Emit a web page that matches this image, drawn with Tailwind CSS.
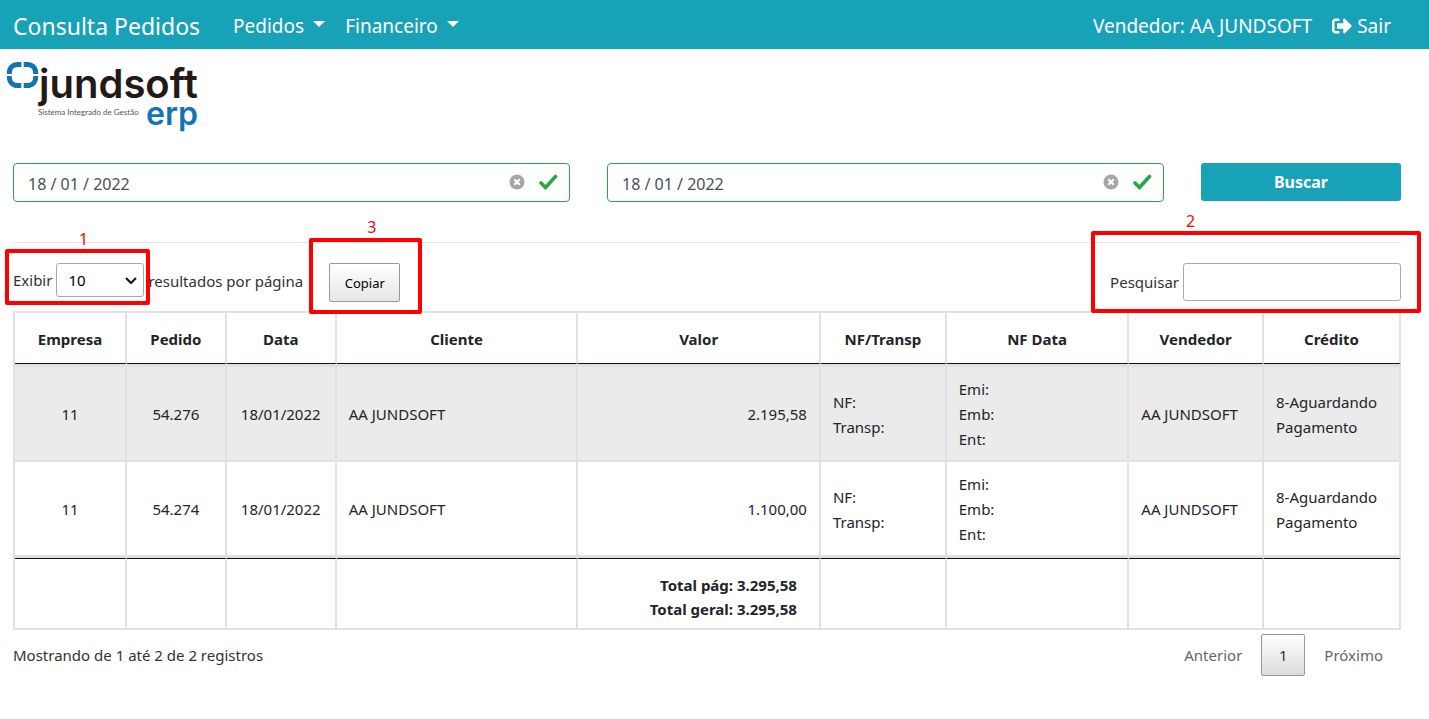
<!DOCTYPE html>
<html lang="pt-BR">
<head>
<meta charset="utf-8">
<meta name="viewport" content="width=device-width, initial-scale=1">
<title>Consulta Pedidos</title>
<script src="https://cdn.jsdelivr.net/npm/@tailwindcss/browser@4"></script>
</head>
<body class="bg-white font-['Noto_Sans',sans-serif] text-[15px] leading-6 text-[#212529]">

<nav class="flex h-[49px] items-center justify-between bg-[#17a2b8] pr-[38px] pl-[13px] pt-[3px] text-[19px] text-white">
  <div class="flex items-center">
    <a href="#" class="mr-[33px] text-[23px]">Consulta Pedidos</a>
    <button type="button" class="mr-5 flex items-center gap-[9px]">Pedidos
      <svg class="mb-1 h-1.5 w-3" viewBox="0 0 12 6" fill="currentColor" aria-hidden="true"><path d="M0 0h12L6 6z"/></svg>
    </button>
    <button type="button" class="flex items-center gap-[9px]">Financeiro
      <svg class="mb-1 h-1.5 w-3" viewBox="0 0 12 6" fill="currentColor" aria-hidden="true"><path d="M0 0h12L6 6z"/></svg>
    </button>
  </div>
  <div class="flex items-center gap-5">
    <span>Vendedor: AA JUNDSOFT</span>
    <a href="#" class="flex items-center gap-[5px]">
      <svg class="size-5" viewBox="0 0 512 512" fill="currentColor" aria-hidden="true"><path d="M497 273L329 441c-15 15-41 4.500-41-17v-96H152c-13.300 0-24-10.700-24-24v-96c0-13.300 10.700-24 24-24h136V88c0-21.400 25.900-32 41-17l168 168c9.300 9.400 9.300 24.600 0 34zM192 436v-40c0-6.600-5.400-12-12-12H96c-17.700 0-32-14.300-32-32V160c0-17.700 14.300-32 32-32h84c6.600 0 12-5.400 12-12V76c0-6.600-5.400-12-12-12H96c-53 0-96 43-96 96v192c0 53 43 96 96 96h84c6.600 0 12-5.400 12-12z"/></svg>
      Sair</a>
  </div>
</nav>

<header class="px-1.5 pt-3">
  <svg class="h-20 w-[196px]" viewBox="0 0 196 80" role="img" aria-label="Jundsoft ERP">
    <g fill="none" stroke="#1273b5" stroke-width="5">
      <path d="M15.300 3.500h-3.500c-5 0-8.500 3.500-8.500 8.500v1"/>
      <path d="M17.700 3.500h3.500c5 0 8.500 3.500 8.500 8.500v1"/>
      <path d="M3.300 15v1c0 5 3.500 8.500 8.500 8.500h3.500"/>
      <path d="M29.700 15v1c0 5-3.500 8.500-8.500 8.500h-3.500"/>
    </g>
    <text x="33" y="37" font-family="Inter, sans-serif" font-size="40" font-weight="600" fill="#231916">jundsoft</text>
    <text x="32" y="54" font-family="Lato, sans-serif" font-size="8" fill="#555">Sistema Integrado de Gestão</text>
    <text x="140" y="64" font-family="Inter, sans-serif" font-size="32" font-weight="600" fill="#1273b5">erp</text>
  </svg>
</header>

<main class="pr-7 pl-[13px]">
  <form class="mt-[22px] flex items-start gap-[37px]">
    <div class="relative flex-1">
      <input type="text" aria-label="Data inicial" value="18 / 01 / 2022" class="block h-[39px] w-full rounded border border-[#28a745] pr-20 pl-3.5 pt-0.5 text-base text-[#495057]">
      <div class="absolute top-0 right-3 bottom-0.5 flex items-center gap-3.5">
        <button type="button" aria-label="Limpar data inicial"><svg class="size-4" viewBox="0 0 16 16"><circle cx="8" cy="8" r="7.500" fill="#a6a6a6"/><path d="M5.300 5.300l5.400 5.400m0-5.400l-5.400 5.400" stroke="#fff" stroke-width="2"/></svg></button>
        <svg class="h-4 w-[19px]" viewBox="0 0 19 16" fill="none" aria-hidden="true"><path d="M2 9l4.500 4.500L16.500 2.500" stroke="#28a745" stroke-width="3.600" stroke-linecap="round"/></svg>
      </div>
    </div>
    <div class="relative flex-1">
      <input type="text" aria-label="Data final" value="18 / 01 / 2022" class="block h-[39px] w-full rounded border border-[#28a745] pr-20 pl-3.5 pt-0.5 text-base text-[#495057]">
      <div class="absolute top-0 right-3 bottom-0.5 flex items-center gap-3.5">
        <button type="button" aria-label="Limpar data final"><svg class="size-4" viewBox="0 0 16 16"><circle cx="8" cy="8" r="7.500" fill="#a6a6a6"/><path d="M5.300 5.300l5.400 5.400m0-5.400l-5.400 5.400" stroke="#fff" stroke-width="2"/></svg></button>
        <svg class="h-4 w-[19px]" viewBox="0 0 19 16" fill="none" aria-hidden="true"><path d="M2 9l4.500 4.500L16.500 2.500" stroke="#28a745" stroke-width="3.600" stroke-linecap="round"/></svg>
      </div>
    </div>
    <button type="submit" class="h-[38px] w-[200px] rounded-[3px] bg-[#17a2b8] text-base font-bold text-white">Buscar</button>
  </form>

  <hr class="mt-10 border-[#e5e5e5]">

  <div class="mt-5 flex items-start justify-between text-[#333]">
    <div class="flex items-start">
      <div class="relative flex items-center gap-1">
        <label for="tamanho">Exibir</label>
        <span class="relative">
          <select id="tamanho" class="block h-[34px] w-[88px] appearance-none rounded-[3px] border border-[#aaa] bg-white pl-[11px] text-black"><option>10</option><option>25</option><option>50</option><option>100</option></select>
          <svg class="pointer-events-none absolute top-3.5 right-[7px] h-[7px] w-3" viewBox="0 0 12 7" fill="none" stroke="#111" stroke-width="2" aria-hidden="true"><path d="M1 1l5 5 5-5"/></svg>
        </span>
        <div class="pointer-events-none absolute -top-3.5 -right-1.5 -bottom-2 -left-2 z-10 rounded-xs border-4 border-[#f00]"></div>
        <span class="absolute -top-9 left-[66px] text-base text-[#f00]">1</span>
      </div>
      <span class="ml-1 pt-1.5">resultados por página |</span>
      <div class="relative ml-3.5">
        <button type="button" class="h-[39px] w-[71px] rounded-xs border border-[#999] bg-linear-to-b from-white to-[#e6e6e6] text-[13px] text-black">Copiar</button>
        <div class="pointer-events-none absolute -top-[25px] -right-[22px] -bottom-3 -left-5 rounded-xs border-4 border-[#f00]"></div>
        <span class="absolute -top-12 left-[38px] text-base text-[#f00]">3</span>
      </div>
    </div>
    <div class="relative flex items-center gap-1">
      <label for="pesquisar">Pesquisar</label>
      <input id="pesquisar" type="search" class="h-[38px] w-[218px] rounded-[3px] border border-[#aaa] px-2">
      <div class="pointer-events-none absolute -top-8 -right-5 -bottom-3 -left-[19px] rounded-xs border-4 border-[#f00]"></div>
      <span class="absolute -top-[54px] left-[76px] text-base text-[#f00]">2</span>
    </div>
  </div>

  <table class="mt-[9px] w-full table-fixed border-separate border-spacing-0 border-t-2 border-l-2 border-[#dee2e6] leading-[25px] [&_td]:border-r-2 [&_td]:border-[#dee2e6] [&_td]:px-3 [&_td]:pt-0.5 [&_td]:pb-0 [&_th]:border-r-2 [&_th]:border-b [&_th]:border-r-[#dee2e6] [&_th]:border-b-[#111]">
    <colgroup>
      <col class="w-[8.08%]"><col class="w-[7.2%]"><col class="w-[7.93%]"><col class="w-[17.44%]"><col class="w-[17.5%]"><col class="w-[9.08%]"><col class="w-[13.17%]"><col class="w-[9.72%]"><col>
    </colgroup>
    <thead>
      <tr class="h-[51px]">
        <th class="pt-0.5">Empresa</th><th class="pt-0.5">Pedido</th><th class="pt-0.5">Data</th><th class="pt-0.5">Cliente</th><th class="pt-0.5">Valor</th><th class="pt-0.5">NF/Transp</th><th class="pt-0.5">NF Data</th><th class="pt-0.5">Vendedor</th><th class="pt-0.5">Crédito</th>
      </tr>
    </thead>
    <tbody>
      <tr class="h-[98px] bg-[#ebebeb] [&>td]:border-t-3 [&>td]:border-b-2">
        <td class="text-center">11</td>
        <td class="text-center">54.276</td>
        <td class="text-center">18/01/2022</td>
        <td>AA JUNDSOFT</td>
        <td class="text-right">2.195,58</td>
        <td>NF:<br>Transp:</td>
        <td>Emi:<br>Emb:<br>Ent:</td>
        <td>AA JUNDSOFT</td>
        <td>8-Aguardando Pagamento</td>
      </tr>
      <tr class="h-24 [&>td]:border-b-3">
        <td class="text-center">11</td>
        <td class="text-center">54.274</td>
        <td class="text-center">18/01/2022</td>
        <td>AA JUNDSOFT</td>
        <td class="text-right">1.100,00</td>
        <td>NF:<br>Transp:</td>
        <td>Emi:<br>Emb:<br>Ent:</td>
        <td>AA JUNDSOFT</td>
        <td>8-Aguardando Pagamento</td>
      </tr>
    </tbody>
    <tfoot>
      <tr class="h-[72px] leading-6 [&>td]:border-t [&>td]:border-b-2 [&>td]:border-t-[#111]">
        <td></td><td></td><td></td><td></td>
        <td><div class="pt-1 pr-2.5 text-right font-bold">Total pág: 3.295,58<br>Total geral: 3.295,58</div></td>
        <td></td><td></td><td></td><td></td>
      </tr>
    </tfoot>
  </table>

  <div class="mt-1 flex items-center justify-between text-[#333]">
    <p>Mostrando de 1 até 2 de 2 registros</p>
    <div class="flex items-center pr-[18px] text-[#666]">
      <button type="button" disabled>Anterior</button>
      <button type="button" class="mx-[19px] h-[42px] w-11 rounded-xs border border-[#979797] bg-linear-to-b from-white to-[#dcdcdc] text-[#333]">1</button>
      <button type="button" disabled>Próximo</button>
    </div>
  </div>
</main>
</body>
</html>
